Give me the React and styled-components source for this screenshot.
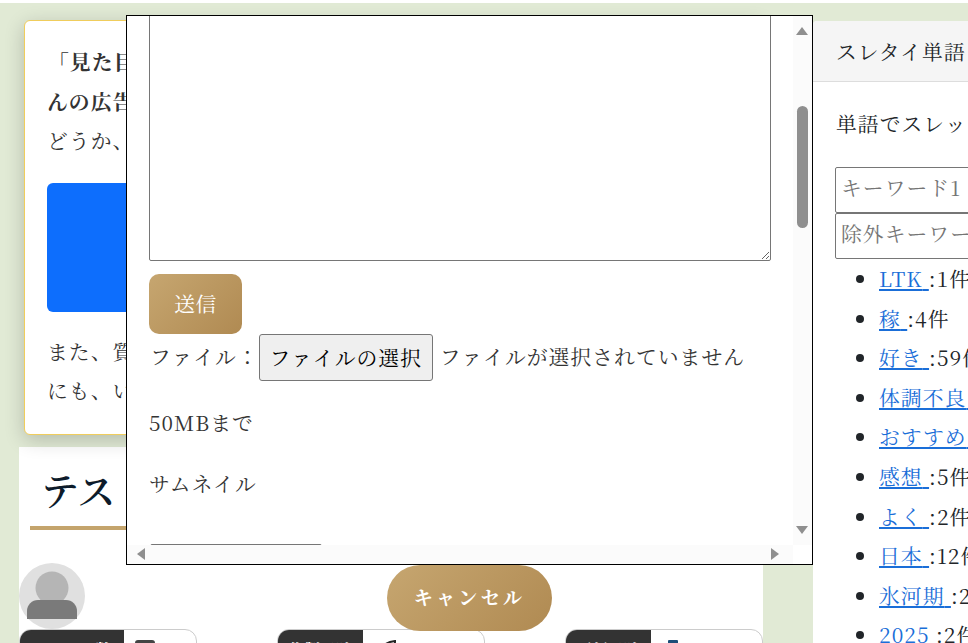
import React from "react";
import styled, { createGlobalStyle } from "styled-components";

const serif = `"Noto Serif CJK JP", "Liberation Serif", "Noto Sans CJK JP", serif`;

const GlobalStyle = createGlobalStyle`
  html, body {
    margin: 0;
    padding: 0;
    height: 100%;
    overflow: hidden;
    background: #fff;
    font-family: ${serif};
    color: #333;
  }
`;

const Page = styled.div`
  position: relative;
  height: 643px;
  padding-top: 3px;
  box-sizing: border-box;
  overflow: hidden;
`;

const Shell = styled.div`
  display: flex;
  height: 640px;
  background: #e1ead5;
`;

const MainColumn = styled.main`
  flex: 0 0 813px;
  display: flex;
  flex-direction: column;
  padding-top: 17px;
  box-sizing: border-box;
`;

const NoticeCard = styled.section`
  position: relative;
  z-index: 1;
  margin-left: 24px;
  width: 740px;
  height: 415px;
  box-sizing: border-box;
  padding: 21px 22px 0;
  background: #fff;
  border: 1px solid #f0cd5c;
  border-radius: 6px;
  box-shadow: 0 5px 20px rgba(0, 0, 0, 0.2);
  font-size: 20.8px;
  letter-spacing: 1.04px;
  line-height: 39.6px;
`;

const NoticeLine = styled.div`
  white-space: nowrap;
  overflow: hidden;
  font-weight: ${(props) => (props.$bold ? 700 : 400)};
  padding-left: ${(props) => (props.$indent ? "1px" : "0")};
`;

const BlueBox = styled.div`
  height: 129px;
  margin: 22px 0 20px;
  background: #0d6efd;
  border-radius: 6px;
`;

const ArticleSection = styled.section`
  margin: 12px 0 0 19px;
  width: 744px;
  flex: 1;
  background: #fff;
  overflow: hidden;
`;

const Title = styled.h1`
  margin: 0 0 0 11px;
  padding: 15px 0 10px 11px;
  height: 83px;
  box-sizing: border-box;
  border-bottom: 4px solid #c4a46c;
  font-size: 38px;
  font-weight: 600;
  line-height: 54px;
  color: #0d1b2a;
`;

const Avatar = styled.svg`
  display: block;
  width: 66px;
  height: 66px;
  margin-top: 33px;
`;

const StatRow = styled.div`
  display: flex;
  justify-content: space-between;
`;

const StatChip = styled.div`
  display: flex;
  width: ${(props) => props.$width}px;
  height: 40px;
  box-sizing: border-box;
  border: 1px solid #ccc;
  border-radius: 12px;
  overflow: hidden;
  font-size: 16px;
`;

const StatLabel = styled.div`
  flex: 0 0 ${(props) => props.$width}px;
  margin: -1px 0 0 -1px;
  padding-top: 9px;
  background: #333;
  color: #fff;
  font-weight: 700;
  text-align: center;
`;

const StatValue = styled.div`
  display: flex;
  gap: ${(props) => props.$gap}px;
  padding: 10px 0 0 ${(props) => props.$pad}px;
  color: #333;
`;

const Sidebar = styled.aside`
  flex: 0 0 320px;
  margin-top: 18px;
  background: #fff;
  border-radius: 4px 0 0 0;
  font-size: 20.8px;
  letter-spacing: 1.04px;
  color: #212529;
`;

const SidebarHeader = styled.div`
  height: 61px;
  box-sizing: border-box;
  padding: 0 23px;
  background: #f5f5f5;
  border-bottom: 1px solid #ddd;
  border-radius: 4px 0 0 0;
  line-height: 60px;
  white-space: nowrap;
`;

const SidebarIntro = styled.p`
  margin: 0;
  padding: 21px 23px 0;
  height: 85px;
  box-sizing: border-box;
  line-height: 40px;
  white-space: nowrap;
`;

const KeywordInput = styled.input`
  display: block;
  margin-left: 22px;
  width: 280px;
  height: 46px;
  box-sizing: border-box;
  padding: 0 5px 6px;
  border: 1px solid #767676;
  border-radius: 2px;
  font: inherit;
  letter-spacing: 1.04px;
  background: #fff;

  &::placeholder {
    color: #757575;
    opacity: 1;
  }
`;

const WordList = styled.ul`
  margin: 0;
  padding: 0 0 0 66px;
  line-height: 39.6px;
  white-space: nowrap;
`;

const WordLink = styled.a`
  color: #1a6ed8;
  text-decoration: underline;
`;

const Modal = styled.div`
  position: absolute;
  left: 126px;
  top: 15px;
  width: 687px;
  height: 550px;
  box-sizing: border-box;
  border: 1px solid #000;
  background: #fff;
  display: grid;
  grid-template-columns: 1fr 19px;
  grid-template-rows: 1fr 19px;
  font-size: 20.8px;
  letter-spacing: 1.04px;
  color: #333;
  z-index: 5;
`;

const ModalBody = styled.div`
  overflow: hidden;
  padding-left: 22px;
`;

const MessageBox = styled.textarea`
  display: block;
  width: 622px;
  height: 265px;
  margin-top: -20px;
  box-sizing: border-box;
  border: 1px solid #767676;
  border-radius: 2px;
  background: #fff;
`;

const SendButton = styled.button`
  display: block;
  width: 93px;
  height: 60px;
  margin-top: 13px;
  padding: 0 0 2px;
  border: 0;
  border-radius: 10px;
  background: linear-gradient(135deg, #c6a670, #b08a52);
  color: #fff;
  font: inherit;
  letter-spacing: 0.5px;
`;

const FileRow = styled.div`
  display: flex;
  align-items: flex-start;
  height: 47px;
  line-height: 44px;
  white-space: nowrap;
  padding-left: 1px;
`;

const FileButton = styled.button`
  width: 174px;
  height: 47px;
  margin: 0 7px 0 0;
  padding: 0 0 3px;
  border: 1px solid #767676;
  border-radius: 3px;
  background: #efefef;
  color: #000;
  font: inherit;
  letter-spacing: 1.04px;
`;

const FormNote = styled.p`
  margin: ${(props) => props.$top}px 0 0;
  line-height: 30px;
`;

const ThumbnailBox = styled.div`
  width: 172px;
  height: 40px;
  box-sizing: border-box;
  margin: 46px 0 0 1px;
  border: 1px solid #767676;
  border-radius: 2px;
`;

const VerticalTrack = styled.div`
  position: relative;
  background: #fbfbfb;
`;

const HorizontalTrack = styled.div`
  position: relative;
  background: #fbfbfb;
`;

const ScrollThumb = styled.div`
  position: absolute;
  left: 4px;
  top: 90px;
  width: 11px;
  height: 122px;
  border-radius: 6px;
  background: #8f8f8f;
`;

const Arrow = styled.svg`
  position: absolute;
  width: 12px;
  height: 12px;
  fill: #8f8f8f;
  ${(props) => props.$place}
`;

const CancelButton = styled.button`
  position: absolute;
  left: 387px;
  top: 565px;
  width: 165px;
  height: 66px;
  padding: 0 0 4px;
  border: 0;
  border-radius: 33px;
  background: linear-gradient(135deg, #c6a670, #b08a52);
  color: #fff;
  font-family: ${serif};
  font-size: 19px;
  font-weight: 700;
  letter-spacing: 3.3px;
  z-index: 6;
`;

const words = [
  ["LTK", "1件"],
  ["稼", "4件"],
  ["好き", "59件"],
  ["体調不良", "3件"],
  ["おすすめ", "7件"],
  ["感想", "5件"],
  ["よく", "2件"],
  ["日本", "12件"],
  ["氷河期", "2件"],
  ["2025", "2件"],
];

const ChatIcon = () => (
  <svg width="20" height="18" viewBox="0 0 20 18">
    <path d="M3 0h14a3 3 0 0 1 3 3v8a3 3 0 0 1-3 3H8l-5 4v-4a3 3 0 0 1-3-3V3a3 3 0 0 1 3-3z" fill="#444" />
  </svg>
);

const LeafIcon = () => (
  <svg width="20" height="18" viewBox="0 0 20 18">
    <path d="M2 16C3 7 9 2 18 1c0 8-5 14-13 13" fill="none" stroke="#222" strokeWidth="2" />
  </svg>
);

const PhoneIcon = () => (
  <svg width="10" height="18" viewBox="0 0 10 18">
    <rect width="10" height="18" rx="1" fill="#1d4e79" />
  </svg>
);

export default function App() {
  return (
    <Page>
      <GlobalStyle />
      <Shell>
        <MainColumn>
          <NoticeCard>
            <NoticeLine $bold $indent>「見た目が気になる方へ、たくさんの</NoticeLine>
            <NoticeLine $bold>んの広告をご覧いただきありがとうございます。</NoticeLine>
            <NoticeLine>どうか、ご協力をお願いいたします。</NoticeLine>
            <BlueBox />
            <NoticeLine>また、質問や相談がある方は掲示板</NoticeLine>
            <NoticeLine>にも、いつでもご投稿ください。</NoticeLine>
          </NoticeCard>
          <ArticleSection>
            <Title>テスト</Title>
            <Avatar viewBox="0 0 66 66">
              <circle cx="33" cy="33" r="33" fill="#e0e0e0" />
              <circle cx="33" cy="25" r="16.5" fill="#b5b5b5" />
              <path d="M8 56V48a11 11 0 0 1 11-11h28a11 11 0 0 1 11 11v8z" fill="#7a7a7a" />
            </Avatar>
            <StatRow>
              <StatChip $width={178}>
                <StatLabel $width={105}>コメント数</StatLabel>
                <StatValue $pad={11} $gap={22}><ChatIcon />12</StatValue>
              </StatChip>
              <StatChip $width={207.5}>
                <StatLabel $width={86}>作製日時</StatLabel>
                <StatValue $pad={14} $gap={42}><LeafIcon />最後</StatValue>
              </StatChip>
              <StatChip $width={198}>
                <StatLabel $width={86}>更新日時</StatLabel>
                <StatValue $pad={17} $gap={40}><PhoneIcon />最後</StatValue>
              </StatChip>
            </StatRow>
          </ArticleSection>
        </MainColumn>
        <Sidebar>
          <SidebarHeader>スレタイ単語</SidebarHeader>
          <SidebarIntro>単語でスレッドを探す</SidebarIntro>
          <KeywordInput placeholder="キーワード1" />
          <KeywordInput placeholder="除外キーワード" />
          <WordList>
            {words.map(([word, count]) => (
              <li key={word}>
                <WordLink href="#">{word} </WordLink>:{count}
              </li>
            ))}
          </WordList>
        </Sidebar>
      </Shell>

      <Modal>
        <ModalBody>
          <MessageBox />
          <SendButton>送信</SendButton>
          <FileRow>
            ファイル：
            <FileButton>ファイルの選択</FileButton>
            ファイルが選択されていません
          </FileRow>
          <FormNote $top={26}>50MBまで</FormNote>
          <FormNote $top={31}>サムネイル</FormNote>
          <ThumbnailBox />
        </ModalBody>
        <VerticalTrack>
          <Arrow $place="left: 3px; top: 9px;" viewBox="0 0 12 12">
            <path d="M6 2l6 8H0z" />
          </Arrow>
          <ScrollThumb />
          <Arrow $place="left: 3px; bottom: 9px;" viewBox="0 0 12 12">
            <path d="M0 2h12l-6 8z" />
          </Arrow>
        </VerticalTrack>
        <HorizontalTrack>
          <Arrow $place="left: 8px; top: 3px;" viewBox="0 0 12 12">
            <path d="M2 6l8-6v12z" />
          </Arrow>
          <Arrow $place="right: 12px; top: 3px;" viewBox="0 0 12 12">
            <path d="M10 6L2 0v12z" />
          </Arrow>
        </HorizontalTrack>
        <div />
      </Modal>
      <CancelButton>キャンセル</CancelButton>
    </Page>
  );
}
